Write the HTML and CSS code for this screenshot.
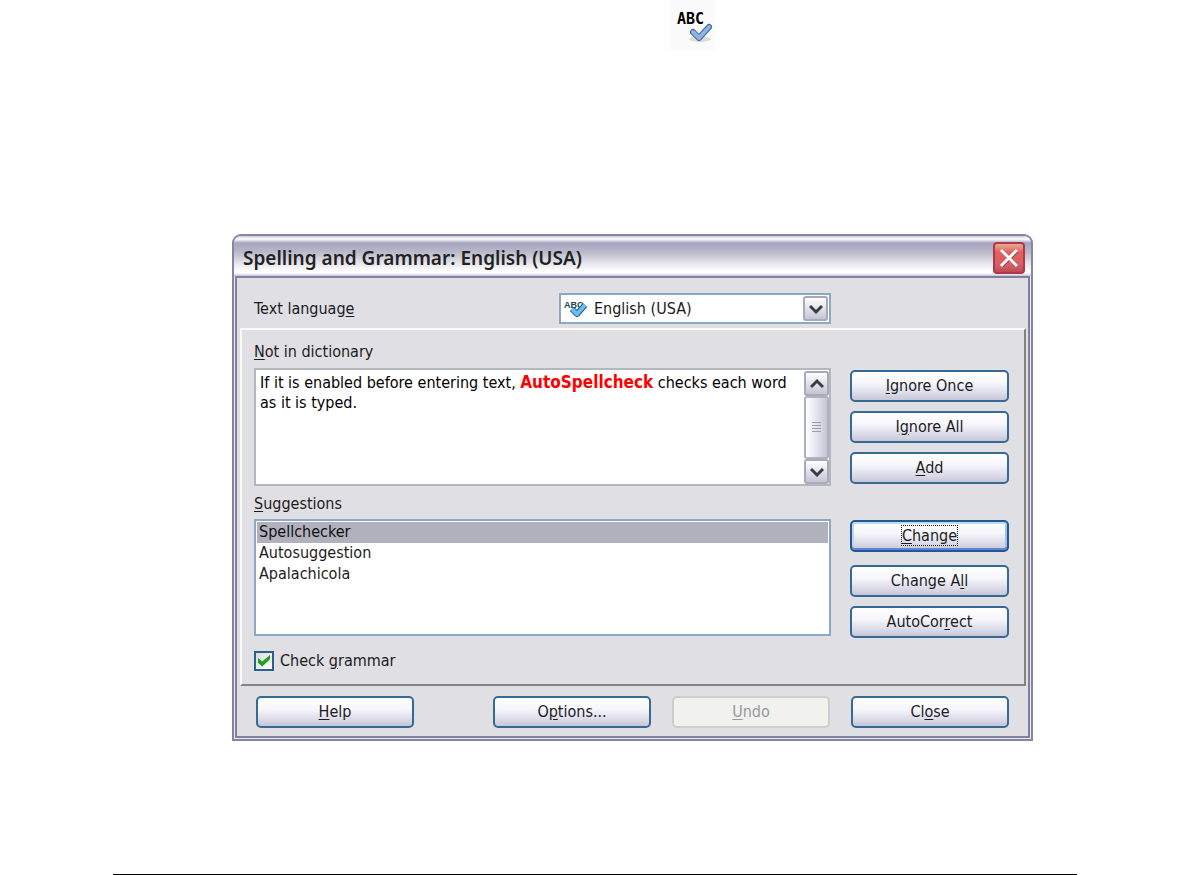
FILE: index.html
```
<!DOCTYPE html>
<html lang="en">
  <head>
    <meta charset="UTF-8" />
    <meta name="viewport" content="width=device-width, initial-scale=1.0" />
    <title>Spelling and Grammar</title>
    <link rel="stylesheet" href="styles.css">
  </head>
  <body>
    <main class="page">
      <div class="tool-icon">
        <svg width="46" height="50" viewBox="0 0 46 50" role="img" aria-label="Spellcheck">
          <text x="7" y="24" class="abc">ABC</text>
          <ellipse cx="30" cy="39" rx="11" ry="3" fill="#dcdcdc" />
          <path d="M23 32l6 6 10-11" fill="none" stroke="#3f6290" stroke-width="6" stroke-linecap="round" stroke-linejoin="round" />
          <path d="M23 32l6 6 10-11" fill="none" stroke="#8cb5e2" stroke-width="4" stroke-linecap="round" stroke-linejoin="round" />
        </svg>
      </div>

      <section class="dialog" role="dialog" aria-labelledby="dialog-title">
        <header class="titlebar">
          <h1 id="dialog-title">Spelling and Grammar: English (USA)</h1>
          <button type="button" class="close" aria-label="Close window">
            <svg width="22" height="22" viewBox="0 0 22 22">
              <path d="M4 4l15 15M19 4L4 19" stroke="#6c2730" stroke-width="3" />
              <path d="M3 3l16 16M19 3L3 19" stroke="#fff" stroke-width="3" />
            </svg>
          </button>
        </header>

        <form class="content">
          <div class="language">
            <label for="language">Text languag<u>e</u></label>
            <div class="combo">
              <select id="language">
                <option>English (USA)</option>
              </select>
              <svg class="combo-icon" width="26" height="22" viewBox="0 0 26 22" aria-hidden="true">
                <text x="0" y="11" class="abc-small">ABC</text>
                <path d="M8 12l5 5 8-9" fill="none" stroke="#1d5a86" stroke-width="6" stroke-linejoin="round" />
                <path d="M8 12l5 5 8-9" fill="none" stroke="#6bbdf2" stroke-width="4" stroke-linejoin="round" />
              </svg>
              <span class="arrow combo-arrow" aria-hidden="true">
                <svg width="14" height="12" viewBox="0 0 14 12"><path d="M1 3l6 6 6-6" /></svg>
              </span>
            </div>
          </div>

          <div class="panel">
            <div class="fields">
              <label id="word-label"><u>N</u>ot in dictionary</label>
              <div class="sentence">
                <div class="sentence-text" contenteditable="true" role="textbox" aria-multiline="true" aria-labelledby="word-label" spellcheck="false">If it is enabled before entering text, <b>AutoSpellcheck</b> checks each word<br>as it is typed.</div>
                <div class="scrollbar">
                  <button type="button" class="arrow" aria-label="Scroll up">
                    <svg width="14" height="12" viewBox="0 0 14 12"><path d="M1 9l6-6 6 6" /></svg>
                  </button>
                  <div class="thumb"></div>
                  <button type="button" class="arrow" aria-label="Scroll down">
                    <svg width="14" height="12" viewBox="0 0 14 12"><path d="M1 3l6 6 6-6" /></svg>
                  </button>
                </div>
              </div>

              <label for="suggestions"><u>S</u>uggestions</label>
              <select id="suggestions" class="suggestions" size="5">
                <option selected>Spellchecker</option>
                <option>Autosuggestion</option>
                <option>Apalachicola</option>
              </select>

              <div class="grammar">
                <input type="checkbox" id="grammar" checked>
                <label for="grammar">Check <u>g</u>rammar</label>
              </div>
            </div>

            <div class="actions">
              <button type="button" class="btn"><u>I</u>gnore Once</button>
              <button type="button" class="btn">I<u>g</u>nore All</button>
              <button type="button" class="btn"><u>A</u>dd</button>
              <button type="button" class="btn default"><span><u>C</u>hange</span></button>
              <button type="button" class="btn">Change A<u>l</u>l</button>
              <button type="button" class="btn">AutoCor<u>r</u>ect</button>
            </div>
          </div>

          <footer class="footer">
            <button type="button" class="btn help"><u>H</u>elp</button>
            <button type="button" class="btn">O<u>p</u>tions...</button>
            <button type="button" class="btn" disabled><u>U</u>ndo</button>
            <button type="button" class="btn">Cl<u>o</u>se</button>
          </footer>
        </form>
      </section>

      <hr class="rule">
    </main>
  </body>
</html>
```
FILE: styles.css
```
* {
  box-sizing: border-box;
}
body {
  margin: 0;
  background: #fff;
  color: #1c1c1c;
  font: 16px/20px "DejaVu Sans Condensed", "DejaVu Sans", sans-serif;
}
button,
select {
  font: inherit;
  color: inherit;
}
u {
  text-underline-offset: 2px;
}
.page {
  max-width: 964px;
  margin: 0 auto;
}

/* toolbar icon */
.tool-icon {
  width: 46px;
  margin-left: 557px;
  background: #fbfbfb;
}
.tool-icon svg {
  display: block;
}
.abc {
  font: bold 15px "DejaVu Sans Mono", monospace;
}
.abc-small {
  font: bold 9px "Liberation Sans", sans-serif;
  fill: #20455c;
}

/* dialog */
.dialog {
  max-width: 801px;
  margin: 184px auto 0 119px;
  border: 2px solid #8585a3;
  border-radius: 9px 9px 0 0;
  background: #e9e9f1;
  overflow: hidden;
}
.titlebar {
  display: flex;
  align-items: center;
  justify-content: space-between;
  height: 40px;
  padding: 4px 6px 0 9px;
  background: linear-gradient(#c8c8d8 0, #fff 3px, #a5a5c2 7px, #b9b9ca 16px, #e4e4ea 27px, #fff 35px, #fff 37px, #c4c4d4 40px);
}
.titlebar h1 {
  margin: 0;
  font: 600 19px/24px "Noto Sans", sans-serif;
  color: #222;
}
.close {
  display: grid;
  place-items: center;
  width: 32px;
  height: 32px;
  padding: 0;
  border: 2px solid #ad3a4b;
  border-radius: 4px;
  background: linear-gradient(#eca895, #e0605f 30%, #d75f65 75%, #bd4c56);
}
.content {
  margin: 0 1px 1px;
  padding: 0 2px 8px 3px;
  border: 2px solid #8080a0;
  background: #e0dfe3;
}
.language {
  display: grid;
  grid-template-columns: 305px 272px;
  align-items: center;
  padding: 15px 0 4px 14px;
}
.combo {
  position: relative;
}
.combo select {
  display: block;
  appearance: none;
  width: 100%;
  height: 31px;
  padding: 0 32px 0 33px;
  border: 2px solid #8ba9c4;
  border-radius: 0;
  background: #fff;
}
.combo-icon {
  position: absolute;
  left: 5px;
  top: 4px;
  pointer-events: none;
}
.combo-arrow {
  position: absolute;
  right: 3px;
  top: 3px;
  pointer-events: none;
}
.arrow {
  display: grid;
  place-items: center;
  width: 25px;
  height: 25px;
  padding: 0;
  border: 2px solid #a9a9b9;
  border-radius: 3px;
  background: linear-gradient(#fff, #e4e4ee 45%, #c4c4d6);
}
.arrow path {
  fill: none;
  stroke: #3c3c40;
  stroke-width: 3;
}

/* main panel */
.panel {
  display: grid;
  grid-template-columns: 1fr 159px;
  gap: 19px;
  padding: 10px 15px 13px 12px;
  border: 2px solid;
  border-color: #fbfbf8 #84847c #84847c #fbfbf8;
}
.fields {
  display: flex;
  flex-direction: column;
}
.fields > label {
  line-height: 24px;
}
.sentence {
  display: flex;
  height: 118px;
  margin: 4px 0 6px;
  border: 2px solid #b3b7be;
  background: #fff;
}
.sentence-text {
  flex: 1;
  padding: 2px 0 0 4px;
  color: #000;
  white-space: nowrap;
  outline: none;
}
.sentence-text b {
  color: #f00;
  font-size: 17px;
}
.scrollbar {
  display: flex;
  flex-direction: column;
  width: 25px;
  padding-top: 1px;
}
.thumb {
  flex: 1;
  border: 2px solid #b0b0c0;
  border-radius: 3px;
  background:
    repeating-linear-gradient(#9c9cae 0 1px, transparent 1px 3px) center / 9px 11px no-repeat,
    linear-gradient(90deg, #fff, #e4e4ee 50%, #c4c4d6);
}
.suggestions {
  height: 117px;
  margin-top: 3px;
  padding: 1px;
  border: 2px solid #8ba9c4;
  border-radius: 0;
  background: #fff;
  overflow: hidden;
  outline: none;
}
.suggestions option {
  min-height: 21px;
  padding: 0 2px;
  line-height: 21px;
}
.suggestions option:checked {
  background: linear-gradient(#b1b1bd, #b1b1bd);
}
.grammar {
  display: flex;
  align-items: center;
  gap: 6px;
  margin-top: 15px;
}
.grammar input {
  appearance: none;
  width: 20px;
  height: 20px;
  margin: 0;
  border: 2px solid #2d5f8f;
  background: linear-gradient(135deg, #dcdcd7, #fff);
}
.grammar input:checked::before {
  content: "";
  display: block;
  width: 12px;
  height: 12px;
  margin: 2px;
  background: #21a121;
  clip-path: polygon(0 25%, 35% 55%, 100% 0, 100% 35%, 35% 95%, 0 65%);
}

/* buttons */
.actions {
  display: flex;
  flex-direction: column;
  gap: 9px;
  padding-top: 30px;
}
.btn {
  height: 32px;
  padding: 0;
  border: 2px solid #376995;
  border-radius: 5px;
  background: linear-gradient(#fff, #f6f6fc 40%, #dcdce9 75%, #c6c6d8);
}
.btn:disabled {
  border-color: #cdcec9;
  background: #f1f1ed;
  color: #9898a2;
}
.default {
  margin: 27px 0 4px;
  border-color: #235790;
  box-shadow: inset 0 2px #bcdcf8, inset 0 -2px #5f86dc, inset 2px 0 #c0d5f2, inset -2px 0 #a5bfec;
}
.default span {
  outline: 1px dotted #222;
}
.footer {
  display: flex;
  gap: 21px;
  padding: 10px 17px 0 16px;
}
.footer .btn {
  width: 158px;
}
.footer .help {
  margin-right: auto;
}
.rule {
  height: 1px;
  margin: 133px 0 0;
  border: 0;
  background: #000;
}
```
